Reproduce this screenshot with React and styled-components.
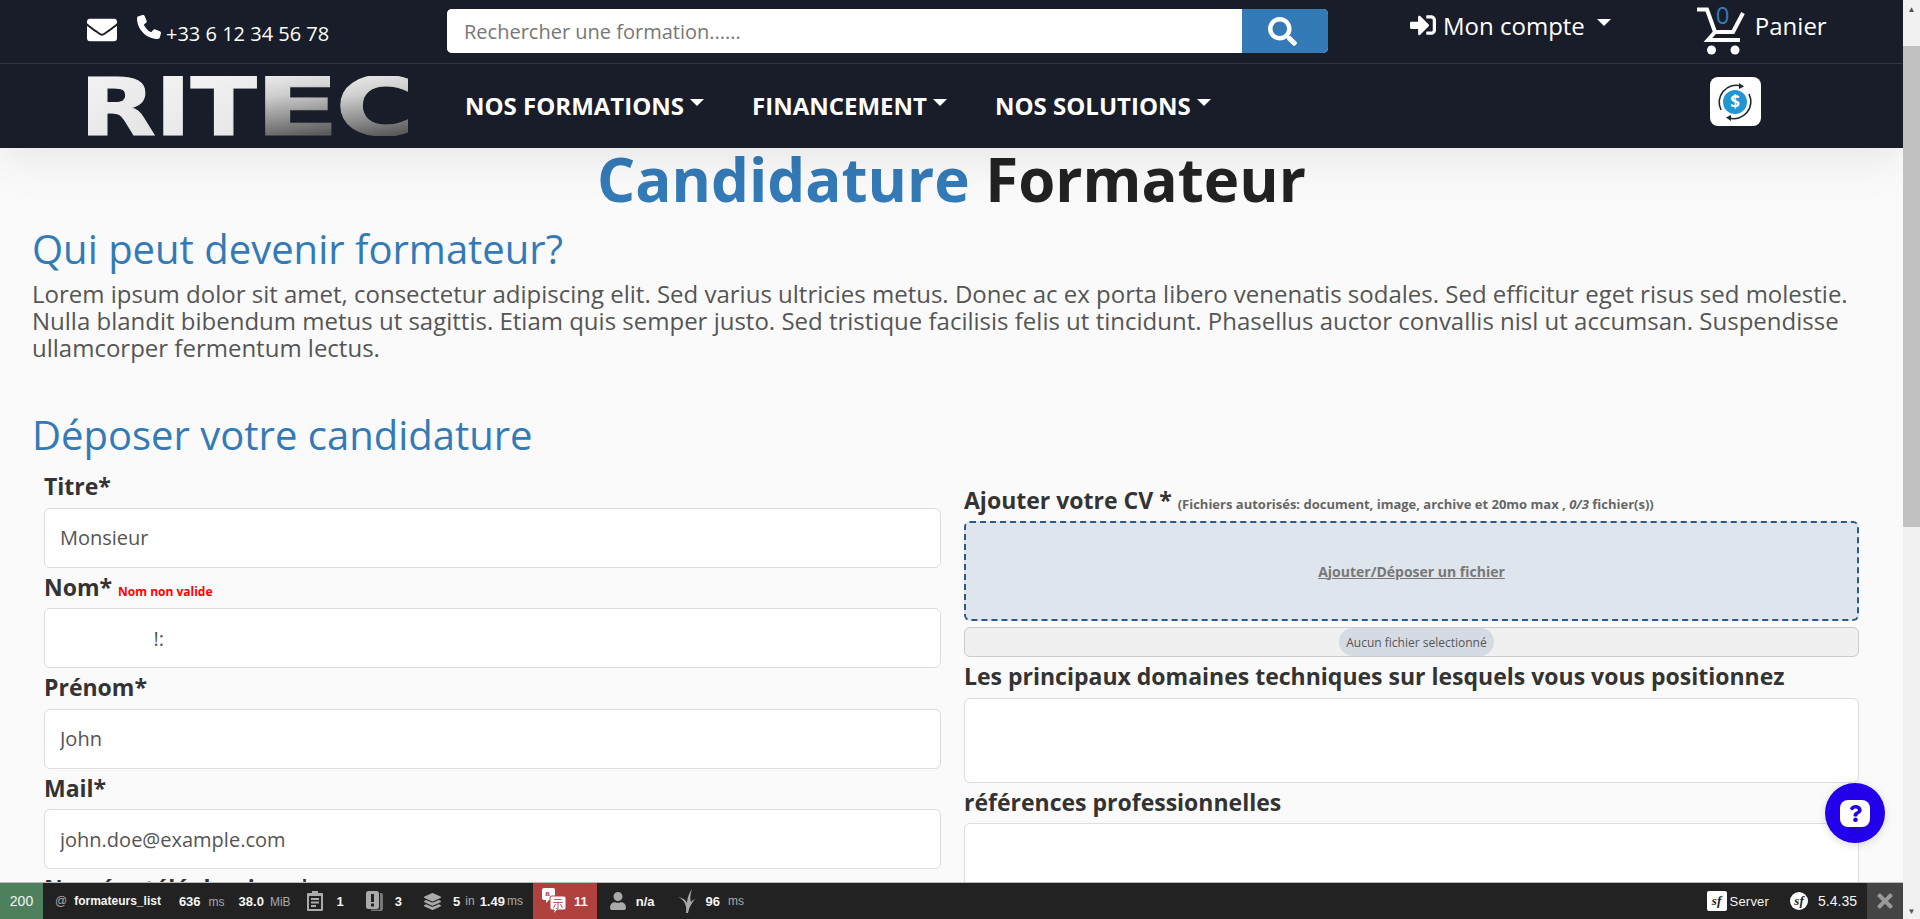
import React from 'react';
import styled, { createGlobalStyle } from 'styled-components';
import { FaEnvelope, FaSearch, FaSignInAlt, FaTimes, FaUser, FaQuestion } from 'react-icons/fa';
import { FaPhone, FaLayerGroup } from 'react-icons/fa6';

// left = ink start of the glyph in em, sx = horizontal stretch to reach the logo's blocky width
const LOGO_LETTERS = [
  { c: 'R', x: 0, left: 0.092, sx: 1.24 },
  { c: 'I', x: 76, left: 0.092, sx: 1.2 },
  { c: 'T', x: 102, left: -0.005, sx: 1.2 },
  { c: 'E', x: 178, left: 0.092, sx: 1.54 },
  { c: 'C', x: 253, left: 0.05, sx: 1.35 },
];

const LEFT_FIELDS = [
  { label: 'Titre*', value: 'Monsieur' },
  { label: 'Nom*', value: '                  !:', error: 'Nom non valide' },
  { label: 'Prénom*', value: 'John' },
  { label: 'Mail*', value: 'john.doe@example.com' },
  { label: 'Numéro téléphonique*', value: '' },
];

const Logo = () => (
  <LogoSvg viewBox="0 0 320 60" aria-label="RITEC">
    <defs>
      <linearGradient id="logoGrad" gradientUnits="userSpaceOnUse" x1="0" y1="-60" x2="55" y2="0">
        <stop offset="0" stopColor="#f4f4f4" />
        <stop offset="1" stopColor="#e4e4e4" />
      </linearGradient>
      <linearGradient id="logoGradDark" gradientUnits="userSpaceOnUse" x1="25" y1="-62" x2="38" y2="0">
        <stop offset="0" stopColor="#e8e8e8" />
        <stop offset="0.3" stopColor="#d0d0d0" />
        <stop offset="1" stopColor="#5c5c5c" />
      </linearGradient>
    </defs>
    {LOGO_LETTERS.map((l) => (
      <text
        key={l.c}
        transform={`translate(${l.x - l.left * 81 * l.sx} 59) scale(${l.sx} 1)`}
        fill={l.x > 170 ? 'url(#logoGradDark)' : 'url(#logoGrad)'}
        stroke={l.x > 170 ? 'url(#logoGradDark)' : 'url(#logoGrad)'}
        strokeWidth="1"
        fontFamily="'DejaVu Sans', sans-serif"
        fontWeight="700"
        fontSize="81"
      >
        {l.c}
      </text>
    ))}
  </LogoSvg>
);

const CartIcon = () => (
  <svg width="48" height="55" viewBox="0 0 48 55" fill="none">
    <path d="M0 9.5 H10 L18 32 H36 L46 13 M18 32 L11 40 H43" stroke="#fff" strokeWidth="4" />
    <circle cx="14.5" cy="50" r="4.5" fill="#fff" />
    <circle cx="38" cy="50" r="4.5" fill="#fff" />
  </svg>
);

const DollarIcon = () => (
  <svg width="38" height="38" viewBox="0 0 38 38" fill="none">
    <circle cx="19" cy="19" r="12" fill="#2196d3" />
    <text x="19" y="25" textAnchor="middle" fill="#fff" fontSize="17" fontWeight="700" fontFamily="'Open Sans', sans-serif">$</text>
    <path d="M5 27 A17 17 0 0 1 25 3" stroke="#1d2733" strokeWidth="1.6" />
    <path d="M33 11 A17 17 0 0 1 13 35" stroke="#1d2733" strokeWidth="1.6" />
    <path d="M23 0 L28 3.5 L23 6 Z M15 32 L10 34.500 L15 38 Z" fill="#1d2733" />
  </svg>
);

const ClipboardIcon = () => (
  <svg width="16" height="20" viewBox="0 0 16 20">
    <path d="M5 0 H11 V2 H15 A1 1 0 0 1 16 3 V19 A1 1 0 0 1 15 20 H1 A1 1 0 0 1 0 19 V3 A1 1 0 0 1 1 2 H5 Z M2 5 V18 H14 V5 Z" fill="#aaa" fillRule="evenodd" />
    <path d="M4 7 H12 V9 H4 Z M4 10.500 H12 V12.500 H4 Z M4 14 H9 V16 H4 Z" fill="#aaa" />
  </svg>
);

const LogsIcon = () => (
  <svg width="17" height="20" viewBox="0 0 17 20">
    <path d="M14 2 H15.500 A1.500 1.500 0 0 1 17 3.500 V18 A2 2 0 0 1 15 20 H5 V18.500 H14 Z" fill="#777" />
    <rect x="0" y="0" width="13" height="18" rx="2.500" fill="#aaa" />
    <rect x="5" y="3" width="3" height="8" fill="#222" />
    <rect x="5" y="12.500" width="3" height="3" fill="#222" />
  </svg>
);

const TranslationIcon = () => (
  <svg width="24" height="26" viewBox="0 0 24 26">
    <path d="M2 0 H11 A2 2 0 0 1 13 2 V10 A2 2 0 0 1 11 12 H7 L4 15 V12 H2 A2 2 0 0 1 0 10 V2 A2 2 0 0 1 2 0 Z" fill="#fff" />
    <path d="M10 8 H22 A2 2 0 0 1 24 10 V20 A2 2 0 0 1 22 22 H15 L12 26 V22 H10 A2 2 0 0 1 8 20 V10 A2 2 0 0 1 10 8 Z" fill="#fff" stroke="#b0413e" />
    <text x="16" y="20" textAnchor="middle" fontSize="11" fill="#b0413e" fontFamily="'Noto Sans CJK SC', sans-serif">示</text>
    <text x="5.500" y="8" textAnchor="middle" fontSize="8" fontWeight="700" fill="#b0413e" fontFamily="'Liberation Sans', sans-serif">a</text>
  </svg>
);

const TwigIcon = () => (
  <svg width="17" height="24" viewBox="0 0 17 24">
    <path d="M8 24 C9 17 7 11 0 8 C5 9 8 11 9 14 C9 9 11 4 14 0 C12 6 12 10 13 13 C14 12 15 11 17 10 C14 14 11 18 10 24 Z" fill="#aaa" />
  </svg>
);

const SfMark = () => <SfGlyph>sf</SfGlyph>;

const App = () => {
  return (
    <Page>
      <GlobalStyle />
      <Main>
        <Header>
          <TopBar>
            <Contact>
              <FaEnvelope size={30} />
              <FaPhone size={24} />
              <Phone>+33 6 12 34 56 78</Phone>
            </Contact>
            <SearchForm>
              <SearchInput placeholder="Rechercher une formation......" />
              <SearchButton aria-label="Rechercher"><FaSearch size={29} /></SearchButton>
            </SearchForm>
            <Account>
              <FaSignInAlt size={26} />
              <span>Mon compte</span>
              <Caret $gap={5} />
            </Account>
            <Cart>
              <CartIcon />
              <CartCount>0</CartCount>
              <span>Panier</span>
            </Cart>
          </TopBar>
          <NavBar>
            <Logo />
            <NavList>
              <NavItem>NOS FORMATIONS<Caret $gap={6} /></NavItem>
              <NavItem>FINANCEMENT<Caret $gap={6} /></NavItem>
              <NavItem>NOS SOLUTIONS<Caret $gap={6} /></NavItem>
            </NavList>
            <ConvertBadge><DollarIcon /></ConvertBadge>
          </NavBar>
        </Header>

        <Content>
          <Title><span>Candidature</span> Formateur</Title>
          <SectionTitle>Qui peut devenir formateur?</SectionTitle>
          <Lead>
            Lorem ipsum dolor sit amet, consectetur adipiscing elit. Sed varius ultricies metus. Donec ac ex porta libero venenatis sodales. Sed efficitur eget risus sed molestie. Nulla blandit bibendum metus ut sagittis. Etiam quis semper justo. Sed tristique facilisis felis ut tincidunt. Phasellus auctor convallis nisl ut accumsan. Suspendisse ullamcorper fermentum lectus.
          </Lead>
          <SectionTitle $second>Déposer votre candidature</SectionTitle>
          <FormGrid>
            <Column>
              {LEFT_FIELDS.map((f) => (
                <Field key={f.label}>
                  <Label>
                    {f.label}
                    {f.error && <ErrorText>{f.error}</ErrorText>}
                  </Label>
                  <TextInput readOnly value={f.value} />
                </Field>
              ))}
            </Column>
            <Column>
              <Label $high>
                Ajouter votre CV *
                <Hint>(Fichiers autorisés: document, image, archive et 20mo max , <em>0/3</em> fichier(s))</Hint>
              </Label>
              <DropZone>Ajouter/Déposer un fichier</DropZone>
              <FileBar><FilePill>Aucun fichier selectionné</FilePill></FileBar>
              <Label>Les principaux domaines techniques sur lesquels vous vous positionnez</Label>
              <TextArea $h={85} />
              <Label>références professionnelles</Label>
              <TextArea $h={85} />
            </Column>
          </FormGrid>
        </Content>

        <HelpButton aria-label="Aide">
          <HelpBubble><FaQuestion size={17} /></HelpBubble>
        </HelpButton>

        <Toolbar>
          <StatusBlock>200</StatusBlock>
          <Route><At>@</At><b>formateurs_list</b></Route>
          <Metric $ml={18} $gap={8}><b>636</b><Muted>ms</Muted></Metric>
          <Metric $ml={14} $gap={6}><b>38.0</b><Muted>MiB</Muted></Metric>
          <IconMetric $ml={16} $ig={9}><ClipboardIcon /><b>1</b></IconMetric>
          <IconMetric $ml={22} $ig={7}><LogsIcon /><b>3</b></IconMetric>
          <IconMetric $ml={21} $ig={6}><FaLayerGroup size={19} color="#aaa" /><b>5</b><Muted>in</Muted><b>1.49</b><MsTight>ms</MsTight></IconMetric>
          <AlertBlock><TranslationIcon /><b>11</b></AlertBlock>
          <IconMetric $ml={12} $ig={4}><FaUser size={18} color="#aaa" /><b>n/a</b></IconMetric>
          <IconMetric $ml={24} $ig={5}><TwigIcon /><b>96</b><MsTight $wide>ms</MsTight></IconMetric>
          <ToolbarRight>
            <SfSquare><SfMark /></SfSquare>
            <ServerText>Server</ServerText>
            <SfRound><SfMark /></SfRound>
            <Version>5.4.35</Version>
            <CloseBlock><FaTimes size={22} /></CloseBlock>
          </ToolbarRight>
        </Toolbar>
      </Main>

      <ScrollTrack>
        <ScrollArrow>▲</ScrollArrow>
        <ScrollThumb />
        <ScrollArrow $bottom>▼</ScrollArrow>
      </ScrollTrack>
    </Page>
  );
};

export default App;

const GlobalStyle = createGlobalStyle`
  html, body {
    margin: 0;
    height: 100%;
    overflow: hidden;
  }
  * {
    box-sizing: border-box;
  }
  body {
    font-family: "Open Sans", sans-serif;
    background: #fafafa;
  }
`;

const Page = styled.div`
  display: flex;
  height: 100vh;
  overflow: hidden;
`;

const Main = styled.div`
  flex: 1;
  min-width: 0;
  height: 100%;
  overflow: hidden;
  background: #fafafa;
`;

const Header = styled.header`
  position: relative;
  z-index: 2;
  background: #191d29;
  color: #fff;
  box-shadow: 0 8px 45px rgba(0, 0, 0, 0.09);
`;

const TopBar = styled.div`
  display: flex;
  align-items: flex-start;
  height: 64px;
  padding-left: 87px;
  border-bottom: 1px solid #33363f;
`;

const Contact = styled.div`
  display: flex;
  align-items: center;
  width: 360px;
  height: 60px;
  gap: 20px;
  svg + svg {
    margin-top: -6px;
  }
`;

const Phone = styled.span`
  margin: 6px 0 0 -15px;
  font-size: 20px;
`;

const SearchForm = styled.form`
  display: flex;
  width: 881px;
  height: 44px;
  margin-top: 9px;
  background: #fff;
  border-radius: 5px;
  overflow: hidden;
`;

const SearchInput = styled.input`
  flex: 1;
  min-width: 0;
  border: none;
  outline: none;
  padding: 0 17px;
  font: 20px "Open Sans", sans-serif;
  &::placeholder {
    color: #777;
  }
`;

const SearchButton = styled.button`
  display: flex;
  align-items: center;
  justify-content: center;
  width: 86px;
  padding: 0 6px 0 0;
  border: none;
  background: #337ab7;
  color: #fff;
`;

const Account = styled.div`
  display: flex;
  align-items: center;
  height: 50px;
  margin-left: 82px;
  gap: 7px;
  font-size: 24px;
`;

const Cart = styled.div`
  position: relative;
  display: flex;
  align-items: center;
  height: 50px;
  margin-left: 86px;
  gap: 10px;
  font-size: 24px;
  svg {
    margin-top: 5px;
  }
`;

const CartCount = styled.span`
  position: absolute;
  left: 19px;
  top: -1px;
  color: #337ab7;
  font-size: 24px;
  line-height: 32px;
`;

const NavBar = styled.nav`
  display: flex;
  align-items: center;
  height: 84px;
  padding-left: 88px;
`;

const LogoSvg = styled.svg`
  width: 320px;
  height: 60px;
  flex: none;
`;

const NavList = styled.ul`
  display: flex;
  margin: 0 0 2px 57px;
  padding: 0;
  gap: 48px;
  list-style: none;
`;

const NavItem = styled.li`
  display: flex;
  align-items: center;
  font-size: 24px;
  font-weight: 700;
`;

const Caret = styled.i`
  display: inline-block;
  width: 0;
  height: 0;
  margin-left: ${(p) => p.$gap}px;
  margin-top: -5px;
  border-top: 7px solid #fff;
  border-left: 7px solid transparent;
  border-right: 7px solid transparent;
`;

const ConvertBadge = styled.div`
  display: flex;
  align-items: center;
  justify-content: center;
  width: 51px;
  height: 49px;
  margin: 0 0 9px 499px;
  background: #fff;
  border-radius: 8px;
`;

const Content = styled.main`
  padding: 1px 32px 0;
`;

const Title = styled.h1`
  margin: 0;
  text-align: center;
  font-size: 60px;
  line-height: 60px;
  font-weight: 700;
  color: #222;
  span {
    color: #337ab7;
  }
`;

const SectionTitle = styled.h2`
  margin: ${(p) => (p.$second ? '48px' : '14px')} 0 0;
  font-size: 40px;
  line-height: 52px;
  font-weight: 400;
  color: #337ab7;
`;

const Lead = styled.p`
  margin: 5px 0 0;
  font-size: 24px;
  line-height: 27px;
  color: #555;
`;

const FormGrid = styled.div`
  display: grid;
  grid-template-columns: 897px 895px;
  column-gap: 23px;
  margin-top: 6px;
  padding-left: 12px;
`;

const Column = styled.div`
  display: flex;
  flex-direction: column;
`;

const Field = styled.div`
  display: flex;
  flex-direction: column;
`;

const Label = styled.label`
  display: block;
  height: 40.5px;
  margin-top: ${(p) => (p.$high ? '13.5px' : '0')};
  font-size: 23px;
  line-height: 38px;
  font-weight: 700;
  color: #333;
  white-space: nowrap;
`;

const ErrorText = styled.small`
  margin-left: 6px;
  font-size: 12px;
  font-weight: 700;
  color: #f00;
`;

const Hint = styled.small`
  margin-left: 6px;
  font-size: 13px;
  font-weight: 700;
  color: #666;
`;

const TextInput = styled.input`
  height: 60px;
  padding: 0 15px;
  background: #fff;
  border: 1px solid #ddd;
  border-radius: 6px;
  outline: none;
  font: 20px "Open Sans", sans-serif;
  color: #555;
`;

const DropZone = styled.div`
  display: flex;
  align-items: center;
  justify-content: center;
  height: 100px;
  background: #dfe5ec;
  border: 2px dashed #2a5a85;
  border-radius: 6px;
  font-size: 14px;
  font-weight: 700;
  color: #777;
  text-decoration: underline;
`;

const FileBar = styled.div`
  display: flex;
  justify-content: center;
  height: 30px;
  margin: 6px 0 0;
  background: #f0f0f0;
  border: 1px solid #ccc;
  border-radius: 6px;
`;

const FilePill = styled.span`
  display: flex;
  align-items: center;
  margin-left: 10px;
  padding: 0 7px;
  background: #d5dbe3;
  border-radius: 15px;
  font-size: 12px;
  color: #555;
`;

const TextArea = styled.div`
  height: ${(p) => p.$h}px;
  background: #fff;
  border: 1px solid #ddd;
  border-radius: 6px;
`;

const HelpButton = styled.button`
  position: fixed;
  left: 1825px;
  top: 783px;
  z-index: 4;
  display: flex;
  align-items: center;
  justify-content: center;
  width: 60px;
  height: 60px;
  padding: 0;
  border: none;
  border-radius: 50%;
  background: #2200ea;
  box-shadow: 0 2px 8px rgba(0, 0, 0, 0.15);
`;

const HelpBubble = styled.span`
  display: flex;
  align-items: center;
  justify-content: center;
  width: 30px;
  height: 27px;
  background: #fff;
  border-radius: 8px;
  color: #2200ea;
`;

const Toolbar = styled.footer`
  position: fixed;
  left: 0;
  right: 17px;
  bottom: 0;
  z-index: 5;
  display: flex;
  align-items: center;
  height: 37px;
  background: #222;
  border-top: 1px solid #bbb;
  color: #f5f5f5;
  font: 12px "Liberation Sans", Arial, sans-serif;
  b {
    font-weight: 700;
    font-size: 13px;
    color: #f5f5f5;
  }
`;

const Muted = styled.span`
  color: #aaa;
  font-size: 12px;
`;

const MsTight = styled(Muted)`
  margin-left: ${(p) => (p.$wide ? '3px' : '-3px')};
`;

const StatusBlock = styled.div`
  display: flex;
  align-items: center;
  justify-content: center;
  width: 43px;
  height: 100%;
  background: #4f805d;
  font-size: 14px;
`;

const Route = styled.div`
  margin-left: 12px;
  b {
    font-size: 12px;
  }
`;

const At = styled(Muted)`
  margin-right: 7px;
`;

const Metric = styled.div`
  display: flex;
  align-items: baseline;
  gap: ${(p) => p.$gap}px;
  margin-left: ${(p) => p.$ml}px;
`;

const IconMetric = styled.div`
  display: flex;
  align-items: center;
  gap: 5px;
  margin-left: ${(p) => p.$ml}px;
  svg {
    margin-right: ${(p) => p.$ig}px;
  }
`;

const AlertBlock = styled.div`
  display: flex;
  align-items: center;
  gap: 8px;
  height: 100%;
  margin-left: 10px;
  padding: 0 9px;
  background: #b0413e;
`;

const ToolbarRight = styled.div`
  display: flex;
  align-items: center;
  height: 100%;
  margin-left: auto;
`;

const SfSquare = styled.span`
  display: flex;
  align-items: center;
  justify-content: center;
  width: 20px;
  height: 20px;
  background: #fff;
  border-radius: 2px;
`;

const SfRound = styled(SfSquare)`
  width: 18px;
  height: 18px;
  border-radius: 50%;
  margin-left: 21px;
`;

const SfGlyph = styled.i`
  font: italic 700 13px "Liberation Serif", serif;
  color: #222;
`;

const ServerText = styled.span`
  margin-left: 3px;
  font-size: 13px;
  letter-spacing: 0.2px;
`;

const Version = styled.span`
  margin-left: 10px;
  font-size: 14px;
`;

const CloseBlock = styled.span`
  display: flex;
  align-items: center;
  justify-content: center;
  width: 36px;
  height: 100%;
  margin-left: 10px;
  background: #444;
  color: #999;
`;

const ScrollTrack = styled.div`
  position: relative;
  display: flex;
  flex-direction: column;
  align-items: center;
  flex: none;
  width: 17px;
  height: 100%;
  background: #f1f1f1;
`;

const ScrollArrow = styled.span`
  display: flex;
  align-items: center;
  justify-content: center;
  flex: none;
  height: 17px;
  margin-top: ${(p) => (p.$bottom ? 'auto' : '0')};
  font-size: 8px;
  color: #505050;
`;

const ScrollThumb = styled.div`
  width: 100%;
  height: 481px;
  margin-top: 29px;
  background: #c1c1c1;
`;
